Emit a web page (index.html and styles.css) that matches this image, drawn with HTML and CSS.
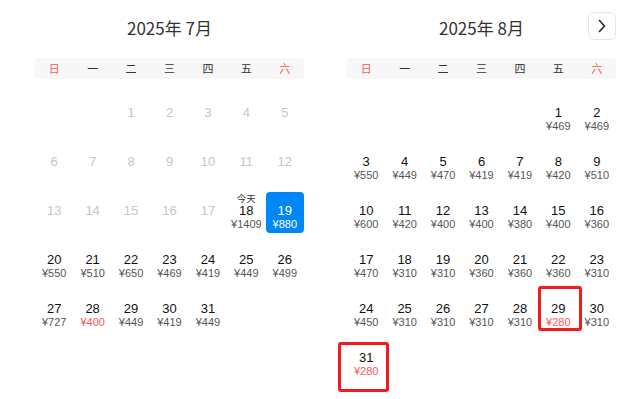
FILE: index.html
```html
<!DOCTYPE html>
<html lang="zh">
<head>
<meta charset="utf-8">
<link rel="stylesheet" href="styles.css">
</head>
<body>
<div class="wrap">
  <section class="month">
    <div class="head">
      <span></span>
      <h2 class="title">2025年 7月</h2>
      <span></span>
    </div>
    <div class="week">
      <span class="we">日</span><span>一</span><span>二</span><span>三</span><span>四</span><span>五</span><span class="we">六</span>
    </div>
    <div class="days">
      <div class="cell"></div><div class="cell"></div>
      <div class="cell off"><span class="lab"></span><span class="num">1</span></div>
      <div class="cell off"><span class="lab"></span><span class="num">2</span></div>
      <div class="cell off"><span class="lab"></span><span class="num">3</span></div>
      <div class="cell off"><span class="lab"></span><span class="num">4</span></div>
      <div class="cell off"><span class="lab"></span><span class="num">5</span></div>
      <div class="cell off"><span class="lab"></span><span class="num">6</span></div>
      <div class="cell off"><span class="lab"></span><span class="num">7</span></div>
      <div class="cell off"><span class="lab"></span><span class="num">8</span></div>
      <div class="cell off"><span class="lab"></span><span class="num">9</span></div>
      <div class="cell off"><span class="lab"></span><span class="num">10</span></div>
      <div class="cell off"><span class="lab"></span><span class="num">11</span></div>
      <div class="cell off"><span class="lab"></span><span class="num">12</span></div>
      <div class="cell off"><span class="lab"></span><span class="num">13</span></div>
      <div class="cell off"><span class="lab"></span><span class="num">14</span></div>
      <div class="cell off"><span class="lab"></span><span class="num">15</span></div>
      <div class="cell off"><span class="lab"></span><span class="num">16</span></div>
      <div class="cell off"><span class="lab"></span><span class="num">17</span></div>
      <div class="cell"><span class="lab">今天</span><span class="num">18</span><span class="price">¥1409</span></div>
      <div class="cell sel"><span class="lab"></span><span class="num">19</span><span class="price">¥880</span></div>
      <div class="cell"><span class="lab"></span><span class="num">20</span><span class="price">¥550</span></div>
      <div class="cell"><span class="lab"></span><span class="num">21</span><span class="price">¥510</span></div>
      <div class="cell"><span class="lab"></span><span class="num">22</span><span class="price">¥650</span></div>
      <div class="cell"><span class="lab"></span><span class="num">23</span><span class="price">¥469</span></div>
      <div class="cell"><span class="lab"></span><span class="num">24</span><span class="price">¥419</span></div>
      <div class="cell"><span class="lab"></span><span class="num">25</span><span class="price">¥449</span></div>
      <div class="cell"><span class="lab"></span><span class="num">26</span><span class="price">¥499</span></div>
      <div class="cell"><span class="lab"></span><span class="num">27</span><span class="price">¥727</span></div>
      <div class="cell"><span class="lab"></span><span class="num">28</span><span class="price low">¥400</span></div>
      <div class="cell"><span class="lab"></span><span class="num">29</span><span class="price">¥449</span></div>
      <div class="cell"><span class="lab"></span><span class="num">30</span><span class="price">¥419</span></div>
      <div class="cell"><span class="lab"></span><span class="num">31</span><span class="price">¥449</span></div>
    </div>
  </section>

  <section class="month">
    <div class="head">
      <span></span>
      <h2 class="title">2025年 8月</h2>
      <button class="next" type="button" aria-label="下个月">
        <svg width="10" height="14" viewBox="0 0 10 14"><path d="M2.5 1.5 L7.5 7 L2.5 12.5" fill="none" stroke="#222" stroke-width="1.6" stroke-linecap="round" stroke-linejoin="round"/></svg>
      </button>
    </div>
    <div class="week">
      <span class="we">日</span><span>一</span><span>二</span><span>三</span><span>四</span><span>五</span><span class="we">六</span>
    </div>
    <div class="days">
      <div class="cell"></div><div class="cell"></div><div class="cell"></div><div class="cell"></div><div class="cell"></div>
      <div class="cell"><span class="lab"></span><span class="num">1</span><span class="price">¥469</span></div>
      <div class="cell"><span class="lab"></span><span class="num">2</span><span class="price">¥469</span></div>
      <div class="cell"><span class="lab"></span><span class="num">3</span><span class="price">¥550</span></div>
      <div class="cell"><span class="lab"></span><span class="num">4</span><span class="price">¥449</span></div>
      <div class="cell"><span class="lab"></span><span class="num">5</span><span class="price">¥470</span></div>
      <div class="cell"><span class="lab"></span><span class="num">6</span><span class="price">¥419</span></div>
      <div class="cell"><span class="lab"></span><span class="num">7</span><span class="price">¥419</span></div>
      <div class="cell"><span class="lab"></span><span class="num">8</span><span class="price">¥420</span></div>
      <div class="cell"><span class="lab"></span><span class="num">9</span><span class="price">¥510</span></div>
      <div class="cell"><span class="lab"></span><span class="num">10</span><span class="price">¥600</span></div>
      <div class="cell"><span class="lab"></span><span class="num">11</span><span class="price">¥420</span></div>
      <div class="cell"><span class="lab"></span><span class="num">12</span><span class="price">¥400</span></div>
      <div class="cell"><span class="lab"></span><span class="num">13</span><span class="price">¥400</span></div>
      <div class="cell"><span class="lab"></span><span class="num">14</span><span class="price">¥380</span></div>
      <div class="cell"><span class="lab"></span><span class="num">15</span><span class="price">¥400</span></div>
      <div class="cell"><span class="lab"></span><span class="num">16</span><span class="price">¥360</span></div>
      <div class="cell"><span class="lab"></span><span class="num">17</span><span class="price">¥470</span></div>
      <div class="cell"><span class="lab"></span><span class="num">18</span><span class="price">¥310</span></div>
      <div class="cell"><span class="lab"></span><span class="num">19</span><span class="price">¥310</span></div>
      <div class="cell"><span class="lab"></span><span class="num">20</span><span class="price">¥360</span></div>
      <div class="cell"><span class="lab"></span><span class="num">21</span><span class="price">¥360</span></div>
      <div class="cell"><span class="lab"></span><span class="num">22</span><span class="price">¥360</span></div>
      <div class="cell"><span class="lab"></span><span class="num">23</span><span class="price">¥310</span></div>
      <div class="cell"><span class="lab"></span><span class="num">24</span><span class="price">¥450</span></div>
      <div class="cell"><span class="lab"></span><span class="num">25</span><span class="price">¥310</span></div>
      <div class="cell"><span class="lab"></span><span class="num">26</span><span class="price">¥310</span></div>
      <div class="cell"><span class="lab"></span><span class="num">27</span><span class="price">¥310</span></div>
      <div class="cell"><span class="lab"></span><span class="num">28</span><span class="price">¥310</span></div>
      <div class="cell mark mark-a"><span class="lab"></span><span class="num">29</span><span class="price low">¥280</span></div>
      <div class="cell"><span class="lab"></span><span class="num">30</span><span class="price">¥310</span></div>
      <div class="cell mark mark-b"><span class="lab"></span><span class="num">31</span><span class="price low">¥280</span></div>
    </div>
  </section>
</div>
</body>
</html>
```

FILE: styles.css
```css
* { box-sizing: border-box; }
html, body { margin: 0; padding: 0; background: #fff; }
body {
  width: 640px;
  height: 399px;
  overflow: hidden;
  font-family: "Liberation Sans", "Noto Sans CJK SC", sans-serif;
  color: #111;
}
.wrap {
  display: flex;
  gap: 43px;
  padding-left: 35px;
}
.month {
  width: 269px;
  flex: none;
}
.head {
  height: 52px;
  display: grid;
  grid-template-columns: 28px 1fr 28px;
  align-items: center;
  margin-bottom: 6px;
}
.title {
  margin: 0;
  padding-top: 3px;
  text-align: center;
  font-family: "Noto Sans CJK SC", sans-serif;
  font-weight: 400;
  font-size: 17px;
  color: #333;
  line-height: 24px;
}
.next {
  width: 28px;
  height: 28px;
  padding: 0;
  border: 1px solid #e6e6e6;
  border-radius: 6px;
  background: #fff;
  display: flex;
  align-items: center;
  justify-content: center;
}
.week {
  height: 21px;
  display: grid;
  grid-template-columns: repeat(7, 1fr);
  align-items: center;
  background: #f7f7f7;
  border-radius: 4px;
  font-family: "Noto Sans CJK SC", sans-serif;
  font-size: 11px;
  color: #333;
  text-align: center;
  line-height: 21px;
}
.week .we { color: #f55a5a; }
.days {
  margin-top: 15px;
  display: grid;
  grid-template-columns: repeat(7, 1fr);
  row-gap: 8px;
}
.cell {
  height: 41px;
  display: grid;
  grid-template-rows: 12px 14px 12px;
  justify-items: center;
  align-items: center;
  text-align: center;
  border-radius: 4px;
  position: relative;
}
.lab {
  font-family: "Noto Sans CJK SC", sans-serif;
  font-size: 9.5px;
  line-height: 11px;
  height: 11px;
  overflow: visible;
  color: #333;
}
.num {
  font-size: 13px;
  line-height: 14px;
  color: #111;
}
.price {
  font-size: 11px;
  line-height: 12px;
  color: #555;
}
.price.low { color: #ff5555; }
.off .num { color: #c6c6c6; }
.sel { background: #0086f6; }
.sel .num, .sel .price { color: #fff; }
.mark::after {
  content: "";
  position: absolute;
  border: 3px solid #f21b1b;
  border-radius: 3px;
  pointer-events: none;
}
.mark-a::after { left: -1px; right: -4px; top: -4px; bottom: 0; }
.mark-b::after { left: -9px; right: -4px; top: 3px; bottom: -12px; }
```
